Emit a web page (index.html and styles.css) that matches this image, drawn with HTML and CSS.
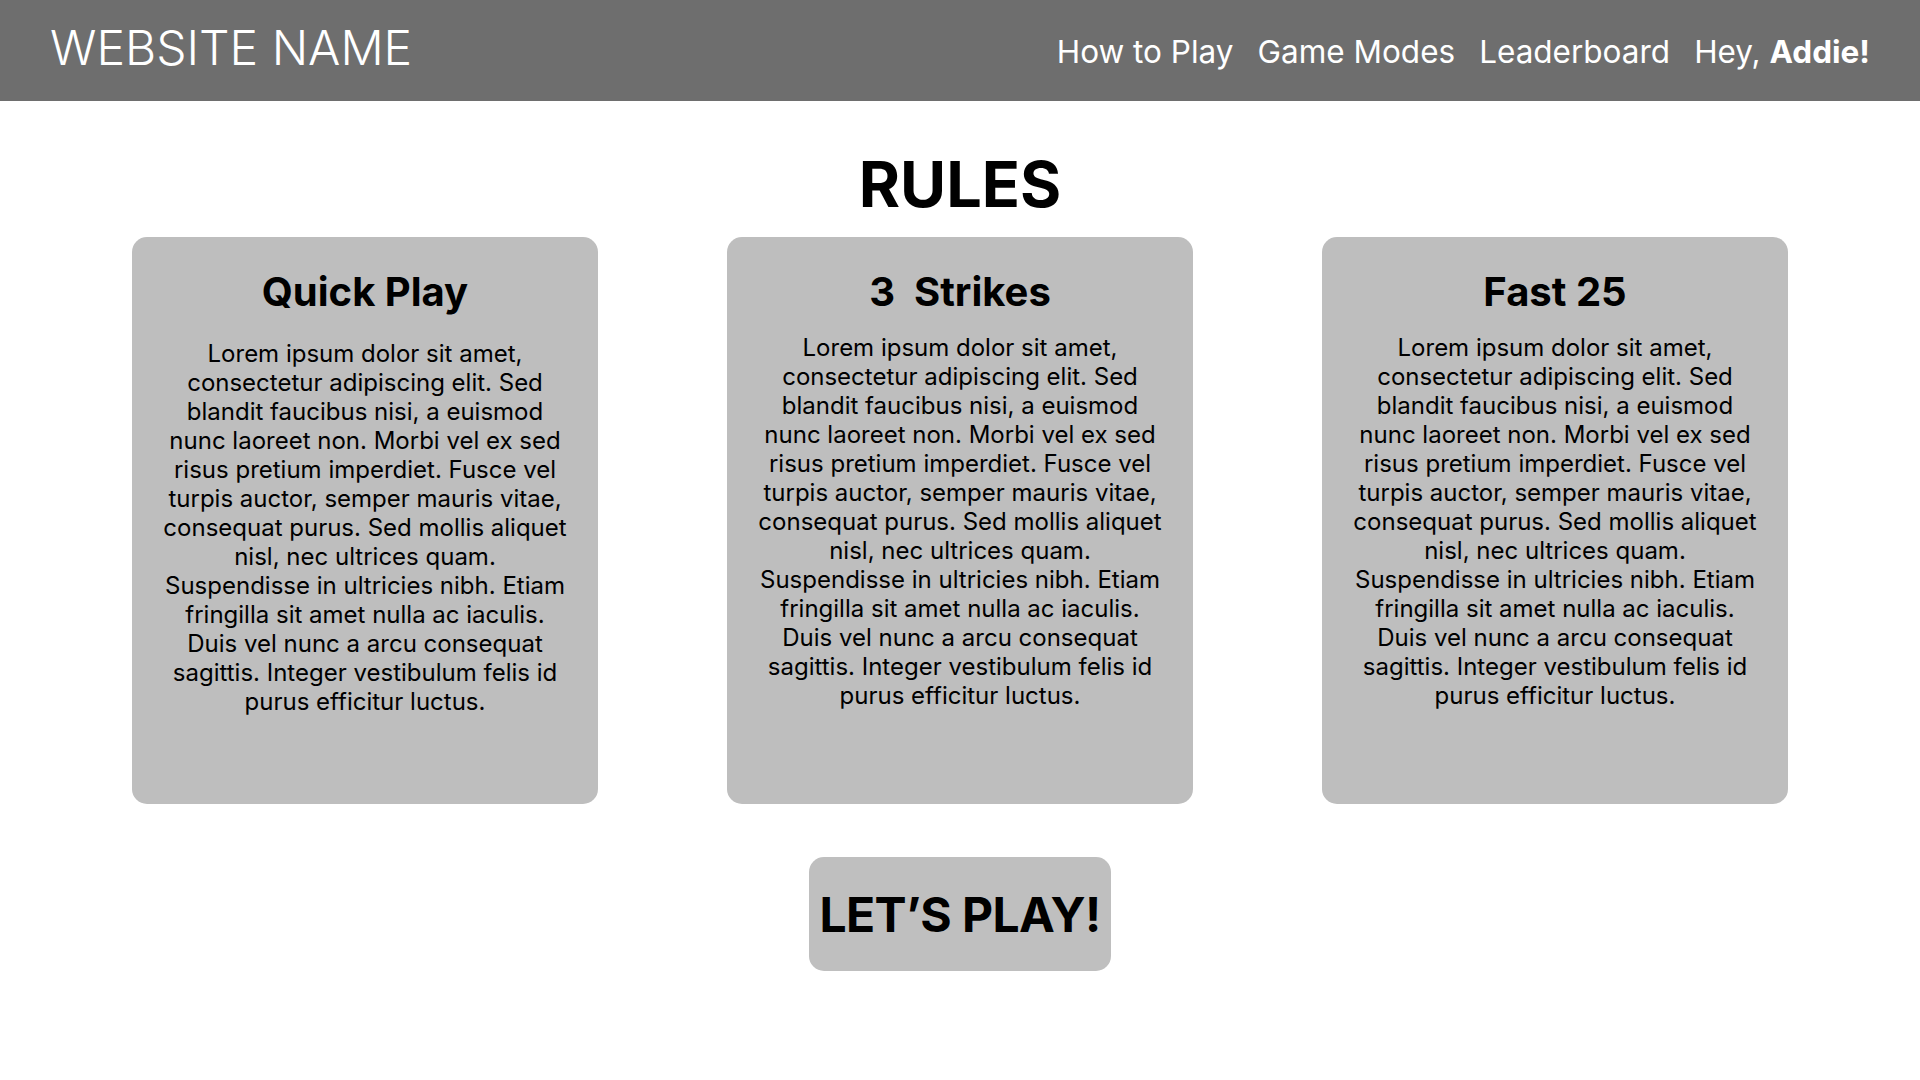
FILE: index.html
```html
<!DOCTYPE html>
<html lang="en">
<head>
    <meta charset="UTF-8">
    <meta name="viewport" content="width=device-width, initial-scale=1.0">
    <title>Rules</title>
    <link rel="stylesheet" href="styles.css">
</head>
<body>
    <header class="topbar">
        <div class="site-name">WEBSITE NAME</div>
        <nav class="nav">
            <a href="#">How to Play</a>
            <a href="#">Game Modes</a>
            <a href="#">Leaderboard</a>
            <span>Hey, <b>Addie!</b></span>
        </nav>
    </header>

    <main class="rules">
        <h1>RULES</h1>
        <div class="cards">
            <div class="card card-first">
                <h2>Quick Play</h2>
                <p>Lorem ipsum dolor sit amet, consectetur adipiscing elit. Sed blandit faucibus nisi, a euismod nunc laoreet non. Morbi vel ex sed risus pretium imperdiet. Fusce vel turpis auctor, semper mauris vitae, consequat purus. Sed mollis aliquet nisl, nec ultrices quam. Suspendisse in ultricies nibh. Etiam fringilla sit amet nulla ac iaculis. Duis vel nunc a arcu consequat sagittis. Integer vestibulum felis id purus efficitur luctus.</p>
            </div>
            <div class="card">
                <h2>3&nbsp; Strikes</h2>
                <p>Lorem ipsum dolor sit amet, consectetur adipiscing elit. Sed blandit faucibus nisi, a euismod nunc laoreet non. Morbi vel ex sed risus pretium imperdiet. Fusce vel turpis auctor, semper mauris vitae, consequat purus. Sed mollis aliquet nisl, nec ultrices quam. Suspendisse in ultricies nibh. Etiam fringilla sit amet nulla ac iaculis. Duis vel nunc a arcu consequat sagittis. Integer vestibulum felis id purus efficitur luctus.</p>
            </div>
            <div class="card">
                <h2>Fast 25</h2>
                <p>Lorem ipsum dolor sit amet, consectetur adipiscing elit. Sed blandit faucibus nisi, a euismod nunc laoreet non. Morbi vel ex sed risus pretium imperdiet. Fusce vel turpis auctor, semper mauris vitae, consequat purus. Sed mollis aliquet nisl, nec ultrices quam. Suspendisse in ultricies nibh. Etiam fringilla sit amet nulla ac iaculis. Duis vel nunc a arcu consequat sagittis. Integer vestibulum felis id purus efficitur luctus.</p>
            </div>
        </div>
        <button class="play-btn">LET’S PLAY!</button>
    </main>
</body>
</html>
```

FILE: styles.css
```css
body { margin: 0; font-family: Inter, "Noto Sans", sans-serif; background-color: #ffffff; color: #000000; }

.topbar { height: 101px; background-color: #6e6e6e; color: #ffffff; display: flex; align-items: center; justify-content: space-between; padding: 0 50px; }
.site-name { font-size: 48px; font-weight: 300; margin-bottom: 6px; }
.nav { display: flex; gap: 24px; font-size: 31.5px; margin-top: 2px; }
.nav a { color: #ffffff; text-decoration: none; }
.nav b { font-weight: 700; }

.rules { display: flex; flex-direction: column; align-items: center; padding-top: 45px; }
.rules h1 { margin: 0 0 15px; font-size: 63px; font-weight: 700; line-height: 1.21; }

.cards { display: flex; justify-content: center; gap: 129px; }
.card { width: 466px; height: 567px; box-sizing: border-box; background-color: #bebebe; border-radius: 15px; padding: 31px 31px 0; text-align: center; }
.card h2 { margin: 0 0 16px; font-size: 40px; font-weight: 700; line-height: 1.21; }
.card p { margin: 0; font-size: 24px; line-height: 1.21; }
.card-first h2 { margin-bottom: 22px; }

.play-btn { margin-top: 53px; height: 114px; padding: 0 10px; background-color: #bfbfbf; border: none; border-radius: 15px; font-family: Inter, sans-serif; font-size: 48px; font-weight: 700; letter-spacing: -0.6px; color: #000000; cursor: pointer; }
```
